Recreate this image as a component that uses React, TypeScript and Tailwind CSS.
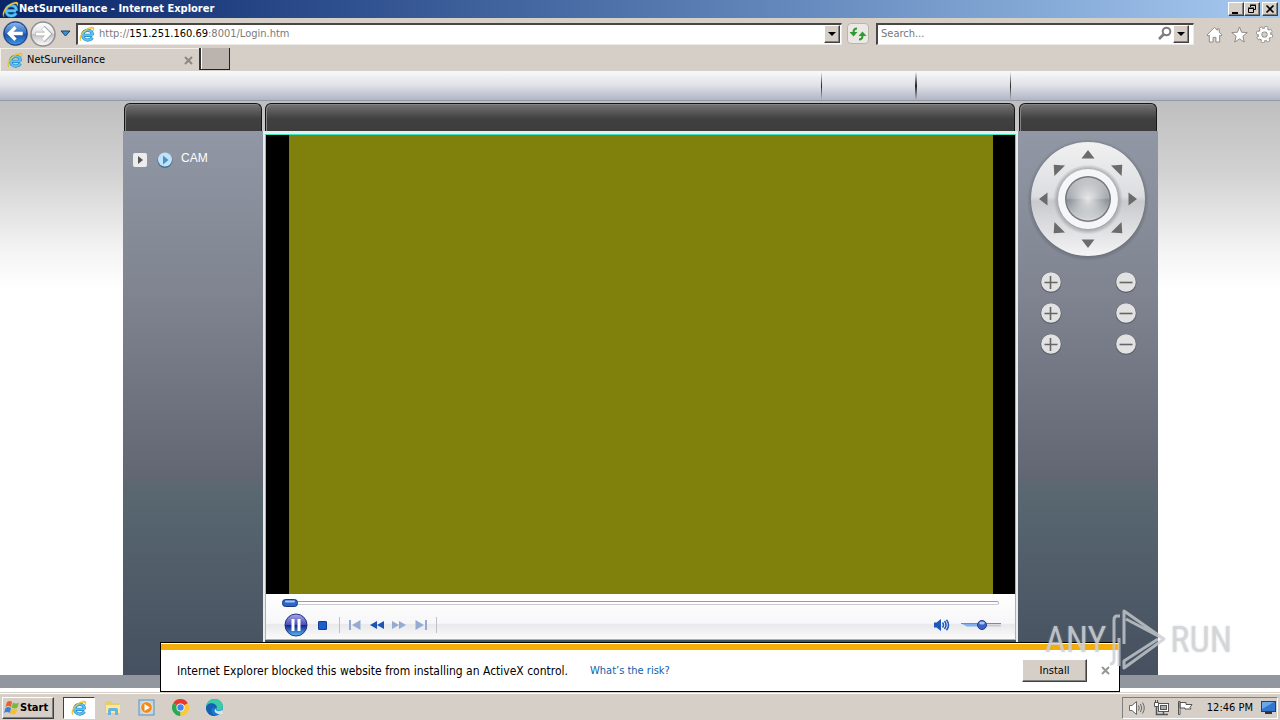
import React from "react";

const ui = "font-['DejaVu_Sans_Condensed','Noto_Sans',sans-serif]";

function IeLogo({ className }: { className: string }) {
  return (
    <svg viewBox="0 0 32 32" className={className} aria-hidden="true">
      <path d="M8 18.500h18.500M26.500 23c-2 3.500-5 5-9 5-6 0-10-4-10-9.500S11.500 8.500 17.500 8.500 27 12.500 27 18.500" fill="none" stroke="#1f86c9" strokeWidth="6.500" />
      <path d="M8 18.500h18.500M26.500 23c-2 3.500-5 5-9 5-6 0-10-4-10-9.500S11.500 8.500 17.500 8.500 27 12.500 27 18.500" fill="none" stroke="#5fc0ee" strokeWidth="4" />
      <path d="M4 30C-2 26 4 14 12 8S29 0 30 4c.6 2 0 4-1 6 0-3-1-5-4-5C17 5 7 14 5 20S3 28 4 30z" fill="#f6cf2c" stroke="#d3a51a" strokeWidth=".6" />
    </svg>
  );
}

const bevel =
  "bg-[#d6cfc8] border border-t-white border-l-white border-r-[#404040] border-b-[#404040] shadow-[inset_-1px_-1px_0_#808080]";

function Caret() {
  return (
    <svg viewBox="0 0 8 4" className="h-1 w-2" aria-hidden="true">
      <path d="M0 0h8L4 4z" fill="#000" />
    </svg>
  );
}

function TitleBar() {
  return (
    <header className="flex h-[18px] shrink-0 items-center justify-between bg-linear-to-r from-[#0a246a] to-[#a6caf0] pr-[2px] pl-[2px]">
      <div className="flex items-center">
        <IeLogo className="size-[17px]" />
        <h1 className={`${ui} text-[11px] leading-4 font-bold text-white`}>NetSurveillance - Internet Explorer</h1>
      </div>
      <div className="flex">
        <button aria-label="Minimize" className={`${bevel} flex h-[14px] w-4 items-center justify-center`}>
          <svg viewBox="0 0 10 10" className="size-[10px]"><path d="M1 8h6v2H1z" /></svg>
        </button>
        <button aria-label="Restore" className={`${bevel} mr-[2px] flex h-[14px] w-4 items-center justify-center`}>
          <svg viewBox="0 0 10 10" className="size-[10px]" fill="none" stroke="#000"><path d="M3.500 3V1.500h5v4H7M3 1h6M1.500 4.500h5v4h-5zM1 4h6" /></svg>
        </button>
        <button aria-label="Close" className={`${bevel} flex h-[14px] w-4 items-center justify-center`}>
          <svg viewBox="0 0 10 10" className="size-[10px]"><path d="M1.500 1.500l7 7M8.500 1.500l-7 7" stroke="#000" strokeWidth="1.700" /></svg>
        </button>
      </div>
    </header>
  );
}

function NavButtons() {
  return (
    <div className="flex items-center">
      <button aria-label="Back">
        <svg viewBox="0 0 28 28" className="size-[27px]">
          <defs>
            <linearGradient id="back" x1="0" y1="0" x2="0" y2="1">
              <stop offset="0" stopColor="#8db7ea" />
              <stop offset=".45" stopColor="#3976c8" />
              <stop offset=".55" stopColor="#1c55ac" />
              <stop offset="1" stopColor="#3c9be4" />
            </linearGradient>
          </defs>
          <circle cx="14" cy="14" r="13" fill="#77797f" />
          <circle cx="14" cy="14" r="12" fill="url(#back)" stroke="#173f86" />
          <path d="M14 7.500L7.500 14l6.500 6.500M8 14h13.500" fill="none" stroke="#fff" strokeWidth="3.400" />
        </svg>
      </button>
      <button aria-label="Forward">
        <svg viewBox="0 0 28 28" className="size-7">
          <defs>
            <linearGradient id="fwd" x1="0" y1="0" x2="0" y2="1">
              <stop offset="0" stopColor="#fff" />
              <stop offset=".48" stopColor="#e2e2e2" />
              <stop offset=".52" stopColor="#c4c4c4" />
              <stop offset="1" stopColor="#fdfdfd" />
            </linearGradient>
          </defs>
          <circle cx="14" cy="14" r="12" fill="url(#fwd)" stroke="#8d8f93" strokeWidth="1.500" />
          <path d="M14 7.500l6.500 6.500-6.500 6.500M20 14H6.500" fill="none" stroke="#a9a9a9" strokeWidth="4.600" />
          <path d="M14 8l6 6-6 6M19.500 14H7" fill="none" stroke="#fff" strokeWidth="3.200" />
        </svg>
      </button>
      <button aria-label="Recent pages" className="ml-[3px]">
        <svg viewBox="0 0 11 7" className="h-[7px] w-[11px]"><path d="M1 1h9L5.500 6z" fill="#3c8fd6" stroke="#12406f" /></svg>
      </button>
    </div>
  );
}

const field = "flex h-[22px] items-center border-t-2 border-l-2 border-r border-b border-t-[#4a4646] border-l-[#4a4646] border-r-[#eceae6] border-b-[#eceae6] bg-white";

function Toolbar() {
  return (
    <div className={`${ui} flex h-[30px] shrink-0 items-center border-t border-[#d4d0c8] bg-[#d6cfc8] px-[2px] text-[11px]`}>
      <NavButtons />
      <div className={`${field} ml-[5px] min-w-0 flex-1 pr-px pl-px`}>
        <IeLogo className="size-4 shrink-0" />
        <div className="min-w-0 flex-1 pl-1 leading-4 text-[#7b7b7b]">
          http://<span className="text-black">151.251.160.69</span>:8001/Login.htm
        </div>
        <button aria-label="Show address list" className={`${bevel} flex h-[18px] w-4 items-center justify-center`}><Caret /></button>
      </div>
      <button aria-label="Refresh" className="mr-[7px] ml-[5px] flex h-[21px] w-[22px] items-center justify-center rounded-sm border border-[#b9b5ae] bg-[#ece9e4]">
        <svg viewBox="0 0 18 16" className="h-4 w-[18px]" fill="none" stroke="#2f9a35" strokeWidth="2">
          <path d="M8 2.500Q4.500 2.500 4.500 6.500" /><path d="M.5 6h8L4.500 10.500z" fill="#2f9a35" stroke="none" />
          <path d="M10 13.500q3.500 0 3.500-4" /><path d="M9.500 10h8l-4-4.500z" fill="#2f9a35" stroke="none" />
        </svg>
      </button>
      <form className={`${field} w-[318px] pr-1`} onSubmit={(e) => e.preventDefault()}>
        <input aria-label="Search" placeholder="Search..." className="min-w-0 flex-1 bg-transparent pl-[3px] leading-4 outline-none placeholder:text-[#777]" />
        <button aria-label="Go">
          <svg viewBox="0 0 16 16" className="size-4" fill="none" stroke="#7d7d7d" strokeWidth="2"><circle cx="9.500" cy="5.500" r="3.800" /><path d="M6.500 8.500L2 13" strokeWidth="2.600" /></svg>
        </button>
        <button aria-label="Search options" className={`${bevel} flex h-[18px] w-4 items-center justify-center`}><Caret /></button>
      </form>
      <div className="ml-3 flex items-center gap-2 pt-[2px] pr-[5px]">
        <button aria-label="Home">
          <svg viewBox="0 0 18 18" className="size-[17px]" fill="#fff" stroke="#8b8782" strokeLinejoin="round"><path d="M9 1.500L1 9.500l1.200 1.200 1.300-1V17h4v-5h3v5h4V9.700l1.300 1L17 9.500l-3-3V3h-2v1.500z" /></svg>
        </button>
        <button aria-label="Favorites">
          <svg viewBox="0 0 18 18" className="size-[17px]" fill="#fff" stroke="#8b8782" strokeLinejoin="round"><path d="M9 1l2.200 5.600 6 .4-4.600 3.800L14 17l-5-3.300L4 17l1.400-6.200L.8 7l6-.4z" /></svg>
        </button>
        <button aria-label="Tools">
          <svg viewBox="0 0 18 18" className="size-[17px]">
            <circle cx="9" cy="9" r="7" fill="none" stroke="#8b8782" strokeWidth="4" strokeDasharray="3.300 2.200" />
            <circle cx="9" cy="9" r="5" fill="none" stroke="#8b8782" strokeWidth="5" />
            <circle cx="9" cy="9" r="7" fill="none" stroke="#fff" strokeWidth="2.400" strokeDasharray="2.500 3" strokeDashoffset="-.4" />
            <circle cx="9" cy="9" r="4.800" fill="none" stroke="#fff" strokeWidth="3" />
          </svg>
        </button>
      </div>
    </div>
  );
}

function Tabs() {
  return (
    <nav className={`${ui} flex h-[23px] shrink-0 bg-[#d6cfc8] text-[11px]`}>
      <div className="flex w-[199px] items-center border-t border-l border-[#f3f0ec] pr-[6px] pl-[6px]">
        <IeLogo className="size-4" />
        <a href="#top" className="flex-1 pl-1 leading-4 text-black">NetSurveillance</a>
        <button aria-label="Close tab">
          <svg viewBox="0 0 9 9" className="size-[9px]"><path d="M1 1l7 7M8 1L1 8" stroke="#8b8782" strokeWidth="2" /></svg>
        </button>
      </div>
      <button aria-label="New tab" className="h-[22px] w-[31px] border-r border-b border-l-2 border-r-[#222] border-b-[#222] border-l-[#333] bg-[#bbb3ae] shadow-[inset_1px_0_0_#fff]" />
    </nav>
  );
}

function PageBanner() {
  const line = "h-7 bg-linear-to-b from-transparent via-[#222] to-transparent";
  return (
    <div className="h-[30px] shrink-0 border-b border-[#9599a2] bg-linear-to-b from-[#f8f9f9] via-[#dfe1e7] to-[#b2b5c5]">
      <div className="mx-auto flex w-[1036px] justify-end gap-[93px] pt-px pr-[147px]">
        <span className={`${line} w-px`} />
        <span className={`${line} w-[2px]`} />
        <span className={`${line} w-px`} />
      </div>
    </div>
  );
}

const cap = "h-7 shrink-0 rounded-t-md border border-b-0 border-[#161616] bg-linear-to-b from-[#707070] from-5% via-[#404040] via-55% to-[#3d3d3d] shadow-[inset_1px_1px_0_#858585]";
const panel = "flex-1 bg-[linear-gradient(#9197a4,#7f8490_30%,#636773_63%,#586770_67%,#465060)]";

function CameraPanel() {
  return (
    <aside className="flex w-[140px] flex-col">
      <div className={`${cap} mx-px`} />
      <div className={`${panel} px-[10px] pt-[17px]`}>
        <div className="flex items-center">
          <button aria-label="Expand CAM" className="mt-1 flex size-[14px] items-center justify-center rounded-xs bg-[#ececec]">
            <svg viewBox="0 0 5 8" className="h-2 w-[5px]"><path d="M0 0l5 4-5 4z" fill="#555" /></svg>
          </button>
          <button className="ml-[10px] flex items-center gap-2 font-['Liberation_Sans',Arial,sans-serif] text-xs leading-4 text-white">
            <svg viewBox="0 0 16 16" className="mt-1 size-4"><circle cx="8" cy="8.500" r="7.500" fill="#426f97" /><circle cx="8" cy="7.500" r="7" fill="#c1e2f8" /><path d="M6 3.500l5.500 4.500L6 12.500z" fill="#4594cd" /></svg>
            CAM
          </button>
        </div>
      </div>
    </aside>
  );
}

function PlayerControls() {
  return (
    <div className="h-[45px] shrink-0 bg-[linear-gradient(#fff,#f7f7f9_65%,#e9e9ec_68%,#fbfbfb)] px-4">
      <div className="flex h-[17px] items-center">
        <svg viewBox="0 0 16 8" className="h-2 w-4"><rect x=".5" y=".5" width="15" height="7" rx="3" fill="#2c66c8" stroke="#18377e" /><rect x="3" y="1.500" width="10" height="2" rx="1" fill="#a5c8f5" /></svg>
        <div className="h-1 flex-1 rounded-r-sm border border-l-0 border-t-[#9c9ca6] border-r-[#b4b4bc] border-b-[#c9c9cf] bg-white" />
      </div>
      <div className="flex h-7 items-center pl-px">
        <button aria-label="Pause">
          <svg viewBox="0 0 26 26" className="size-[26px]">
            <defs><linearGradient id="pause" x1="0" y1="0" x2="0" y2="1"><stop offset="0" stopColor="#a9a9e6" /><stop offset=".48" stopColor="#4b50b8" /><stop offset=".52" stopColor="#16248e" /><stop offset="1" stopColor="#55bdf7" /></linearGradient></defs>
            <circle cx="13" cy="13" r="11" fill="url(#pause)" stroke="#233582" />
            <path d="M8.500 7h3v12h-3zM14.500 7h3v12h-3z" fill="#fff" />
          </svg>
        </button>
        <button aria-label="Stop" className="ml-[9px] size-[9px] rounded-[1px] border border-[#123e96] bg-[#1c5fc6]" />
        <span className="ml-3 h-4 w-px bg-[#c0c0c6]" />
        <button aria-label="Previous" className="ml-[9px]"><svg viewBox="0 0 12 10" className="h-[10px] w-3" fill="#93abd0"><path d="M0 0h2v10H0zM11.500 0v10L3 5z" /></svg></button>
        <button aria-label="Rewind" className="ml-[9px]"><svg viewBox="0 0 14 8" className="h-2 w-[14px]" fill="#1c55b4"><path d="M7 0v8L0 4zM14 0v8L7 4z" /></svg></button>
        <button aria-label="Fast forward" className="ml-2"><svg viewBox="0 0 14 8" className="h-2 w-[14px]" fill="#93abd0"><path d="M0 0v8l7-4zM7 0v8l7-4z" /></svg></button>
        <button aria-label="Next" className="ml-[9px]"><svg viewBox="0 0 12 10" className="h-[10px] w-3" fill="#93abd0"><path d="M10 0h2v10h-2zM.5 0v10L9 5z" /></svg></button>
        <span className="ml-[9px] h-4 w-px bg-[#c0c0c6]" />
        <button aria-label="Mute" className="ml-auto">
          <svg viewBox="0 0 16 12" className="h-3 w-4" fill="none" stroke="#1d58bc" strokeWidth="1.500"><path d="M0 3.500h2.500L7 0v12L2.500 8.500H0z" fill="#1d58bc" stroke="none" /><path d="M8.500 3.500q2 2.500 0 5M10.500 2q3 4 0 8M12.500 .7q4 5.300 0 10.600" /></svg>
        </button>
        <button aria-label="Volume" className="mr-[-3px] ml-[10px]">
          <svg viewBox="0 0 42 12" className="h-3 w-[42px]"><path d="M1 4.500h20v3H7z" fill="#7fb0ec" /><path d="M1 4.500h40" stroke="#6c8bc4" /><path d="M24 6.500h17" stroke="#c9c9cf" strokeWidth="2" /><circle cx="22" cy="6" r="4.500" fill="#3a62c6" stroke="#24408f" /><ellipse cx="22" cy="4" rx="2.800" ry="1.500" fill="#a9c3f2" /></svg>
        </button>
      </div>
    </div>
  );
}

function VideoPanel() {
  return (
    <main className="flex min-w-0 flex-1 flex-col">
      <div className={`${cap} mr-[3px] ml-[2px]`} />
      <div className="flex flex-1 flex-col bg-[#e8ecec] px-[2px] pt-[3px]">
        <div className="flex flex-1 flex-col bg-[#3ce6c0] p-px">
          <div className="flex flex-1 bg-black pr-[22px] pl-[23px]">
            <div className="flex-1 bg-[#80800c]" />
          </div>
          <PlayerControls />
        </div>
        <div className="h-[35px] bg-[#3f5660]" />
      </div>
    </main>
  );
}

const arrows = [0, 45, 90, 135, 180, 225, 270, 315];

function PanTiltPad() {
  return (
    <svg viewBox="0 0 124 124" className="size-[124px]" role="img" aria-label="Pan and tilt control">
      <defs>
        <linearGradient id="ring" x1="0" y1="0" x2="0" y2="1"><stop offset="0" stopColor="#f1f1f1" /><stop offset=".48" stopColor="#dcdde0" /><stop offset=".52" stopColor="#c9cace" /><stop offset="1" stopColor="#f4f4f5" /></linearGradient>
        <linearGradient id="knob" x1="0" y1="0" x2="0" y2="1"><stop offset="0" stopColor="#c4c7ca" /><stop offset=".48" stopColor="#a5a9ae" /><stop offset=".52" stopColor="#8c9198" /><stop offset="1" stopColor="#d9dbdd" /></linearGradient>
        <radialGradient id="shine"><stop offset="0" stopColor="#fff" stopOpacity=".75" /><stop offset="1" stopColor="#fff" stopOpacity="0" /></radialGradient>
        <radialGradient id="shade"><stop offset=".88" stopColor="#50565f" stopOpacity=".7" /><stop offset="1" stopColor="#50565f" stopOpacity="0" /></radialGradient>
        <radialGradient id="well"><stop offset=".85" stopColor="#a3a5aa" /><stop offset="1" stopColor="#a3a5aa" stopOpacity="0" /></radialGradient>
      </defs>
      <circle cx="62" cy="63" r="61" fill="url(#shade)" />
      <circle cx="62" cy="62" r="57" fill="url(#ring)" />
      <circle cx="62" cy="62.500" r="35" fill="url(#well)" />
      <circle cx="62" cy="62" r="30" fill="#f6f6f8" />
      <circle cx="62" cy="62" r="23" fill="#737980" />
      <circle cx="62" cy="62" r="21.500" fill="url(#knob)" />
      <circle cx="62" cy="62" r="19" fill="url(#shine)" />
      {arrows.map((a) => (
        <path
          key={a}
          d={a % 90 === 0 ? "M62 13l6.500 8.500h-13z" : "M62 13.500l7.500 8.500h-15z"}
          fill="#6b6b6b"
          transform={`rotate(${a} 62 62)`}
        />
      ))}
    </svg>
  );
}

function RoundButton({ plus, label }: { plus: boolean; label: string }) {
  return (
    <button aria-label={label}>
      <svg viewBox="0 0 22 22" className="size-[22px]">
        <circle cx="11" cy="11.500" r="10.500" fill="#59606a" />
        <circle cx="11" cy="11" r="9.800" fill="#e2e2e3" />
        <path d={plus ? "M4.500 11.500h13M10.500 5v13" : "M4.500 11.500h13"} stroke="#666" strokeWidth="1.600" />
      </svg>
    </button>
  );
}

function ControlPanel() {
  return (
    <aside className="flex w-[140px] flex-col">
      <div className={`${cap} mx-px`} />
      <div className={`${panel} pt-[6px]`}>
        <div className="flex justify-center"><PanTiltPad /></div>
        <div className="flex flex-col gap-[9px] pt-[10px] pr-[21px] pl-[22px]">
          {["Zoom", "Focus", "Iris"].map((n) => (
            <div key={n} className="flex justify-between">
              <RoundButton plus label={`${n} in`} />
              <RoundButton plus={false} label={`${n} out`} />
            </div>
          ))}
        </div>
      </div>
    </aside>
  );
}

function NotificationBar() {
  return (
    <div role="alert" className={`${ui} absolute bottom-7 left-1/2 flex h-[50px] w-[960px] -translate-x-1/2 flex-col border border-black bg-white pt-px`}>
      <div className="h-[6px] shrink-0 bg-[#f5ae08]" />
      <div className="flex flex-1 items-center pr-[9px] pl-4">
        <p className="text-xs leading-4 text-black">Internet Explorer blocked this website from installing an ActiveX control.</p>
        <a href="#risk" className="ml-[22px] text-[11px] leading-4 text-[#0f60ae]">What’s the risk?</a>
        <button className={`${bevel} ml-auto h-[23px] w-[65px] text-[11px] leading-4`}>Install</button>
        <button aria-label="Close notification" className="ml-[14px]">
          <svg viewBox="0 0 9 9" className="size-[9px]"><path d="M1 1l7 7M8 1L1 8" stroke="#969696" strokeWidth="2" /></svg>
        </button>
      </div>
    </div>
  );
}

function Watermark() {
  return (
    <div aria-hidden="true" className="pointer-events-none absolute right-12 bottom-[46px] flex items-center gap-1 font-['Roboto_Condensed','Open_Sans_Condensed','Liberation_Sans',sans-serif] text-4xl leading-[68px] text-[#d3d5d8]/80 text-shadow-[0_0_2px_#a9adb280]">
      <span>ANY</span>
      <svg viewBox="-2 0 56 64" className="h-16 w-14" fill="none" stroke="#c8ccd1" strokeOpacity=".8" strokeWidth="3" strokeLinejoin="round">
        <path d="M8 8H5q-3 0-3 4v40q0 4-4 4M12 36V3l40 28L12 60v-7l34-22M14 11l36 19M7 58V30" />
      </svg>
      <span>RUN</span>
    </div>
  );
}

function Taskbar() {
  return (
    <footer className={`${ui} flex h-7 shrink-0 items-center border-t border-[#d4d0c8] bg-[#d6cfc8] pt-[2px] pr-[2px] pl-[2px] shadow-[inset_0_1px_0_#fff]`}>
      <button className={`${bevel} flex h-[22px] w-[52px] items-center pl-px text-[11px] leading-4 font-bold`}>
        <svg viewBox="0 0 16 16" className="size-4 shrink-0">
          <path d="M3 2q3-2 5 0L7 7Q4 5 1.500 7z" fill="#e8622c" /><path d="M9 2.500q3 2 6 0L13.500 7.500q-3 2-6 0z" fill="#7ab83c" />
          <path d="M1.500 8Q4 6 7 8l-1 5q-3-2-6 0z" fill="#3c80d6" /><path d="M7.500 8.500q3 2 6 0L12 13.500q-3 2-6 0z" fill="#f4c128" />
        </svg>
        Start
      </button>
      <button aria-label="Internet Explorer" className="ml-[9px] flex h-[22px] w-8 items-center justify-center border border-t-[#404040] border-r-white border-b-white border-l-[#404040] bg-white"><IeLogo className="size-4" /></button>
      <div className="ml-[9px] flex items-center gap-[17px]">
        <button aria-label="File Explorer">
          <svg viewBox="0 0 17 17" className="size-[17px]"><path d="M1 2h6l1 2h7v11H1z" fill="#e9cb67" /><path d="M2 6h14v8H2z" fill="#f8e8a2" /><path d="M4 16v-5q0-2 2-2h6q2 0 2 2v5h-3v-4H7v4z" fill="#69b4dd" /></svg>
        </button>
        <button aria-label="Media Player">
          <svg viewBox="0 0 17 17" className="size-[17px]"><rect x="1" y="1" width="15" height="15" fill="#b8d6ec" stroke="#5f92bd" /><circle cx="8.500" cy="8.500" r="5.800" fill="#f28a18" stroke="#fff" strokeWidth=".6" /><path d="M6.500 5l5.500 3.500-5.500 3.500z" fill="#fff" /></svg>
        </button>
        <button aria-label="Chrome">
          <svg viewBox="0 0 16 16" className="size-[17px]"><path d="M8 8L1.070 4A8 8 0 0 1 14.930 4z" fill="#e33b2e" /><path d="M8 8L1.070 4A8 8 0 0 0 8 16z" fill="#2da94f" /><path d="M8 8l6.930-4A8 8 0 0 1 8 16z" fill="#fcc934" /><circle cx="8" cy="8" r="3.800" fill="#fff" /><circle cx="8" cy="8" r="3" fill="#4285f4" /></svg>
        </button>
        <button aria-label="Edge">
          <svg viewBox="0 0 16 16" className="size-[17px]"><circle cx="8" cy="8" r="8" fill="#1778cf" /><path d="M0 8C0 3 4 0 8 0c5 0 8 3.500 8 7 0 2-1.500 4-4 4-2 0-2.500-1-2-2 1-2-1-4-3-4-4 0-6 2-7 3z" fill="#3ccaa8" /><path d="M0 8c.5-3 3-4.500 6-4 3 .4 4.500 3 3.500 5C8 6.500 5 8 5 10.500 5 14 8 15.500 10 15.800 4 17 0 13 0 8z" fill="#1560b0" /><path d="M9.500 9c-.6 1.500.5 2.500 2.500 2.500 1.500 0 2.500-.5 3.400-1.300L16 14h-5C8 13 7 11 9.500 9z" fill="#d6e4ea" /></svg>
        </button>
      </div>
      <div className="ml-auto flex h-[22px] items-center border border-t-[#808080] border-r-white border-b-white border-l-[#808080] pr-px pl-[5px]">
        <button aria-label="Speakers">
          <svg viewBox="0 0 17 16" className="h-4 w-[17px]" fill="none" stroke="#666"><path d="M1.500 5.500h2.500L8.500 1.500v13L4 10.500H1.500z" fill="#fff" /><path d="M10.500 5.500q1.500 2.500 0 5M12.500 4q2.500 4 0 8M14.500 2.500q3.500 5.500 0 11" /></svg>
        </button>
        <button aria-label="Network" className="ml-2">
          <svg viewBox="0 0 17 16" className="h-4 w-[17px]" stroke="#555" fill="#fff"><rect x="5.500" y="3.500" width="10" height="8" /><rect x="7.500" y="5.500" width="6" height="4" fill="#aaa" /><path d="M6 14.500h9M10.500 12v2M3.500 6.500v8H7" fill="none" strokeWidth="1.500" /><path d="M1.500 2.500h4v4h-4zM2.500 0v2M4.500 0v2" /></svg>
        </button>
        <button aria-label="Action Center" className="ml-[7px]">
          <svg viewBox="0 0 16 16" className="size-4" stroke="#555" fill="#fff"><path d="M1.500 1.500h1.500v13H1.500zM3 2.500h6v2h6l-2 3 1 1.500H8V8H3z" /></svg>
        </button>
        <time className="ml-[14px] text-[11px] leading-4 whitespace-nowrap text-black">12:46 PM</time>
        <button aria-label="Show desktop" className="ml-2">
          <svg viewBox="0 0 15 13" className="h-[13px] w-[15px]"><rect x=".5" y=".5" width="14" height="10" fill="#3276d2" stroke="#1c407c" /><path d="M1 1h12L1 8z" fill="#6aa6ea" /><path d="M4 12h7" stroke="#333" strokeWidth="2" /></svg>
        </button>
      </div>
    </footer>
  );
}

export default function App() {
  return (
    <div id="top" className="relative flex min-h-screen flex-col bg-white">
      <TitleBar />
      <Toolbar />
      <Tabs />
      <PageBanner />
      <div className="flex flex-1 flex-col bg-[linear-gradient(#bfbfbf,#d0d1d0_70px,#f4f4f4_150px,#fff_190px)] pt-[2px]">
        <div className="mx-auto flex w-full max-w-[1036px] flex-1 pl-px">
          <CameraPanel />
          <VideoPanel />
          <ControlPanel />
        </div>
      </div>
      <div className="mb-1 h-[13px] shrink-0 bg-[#91969f]" />
      <NotificationBar />
      <Watermark />
      <Taskbar />
    </div>
  );
}
